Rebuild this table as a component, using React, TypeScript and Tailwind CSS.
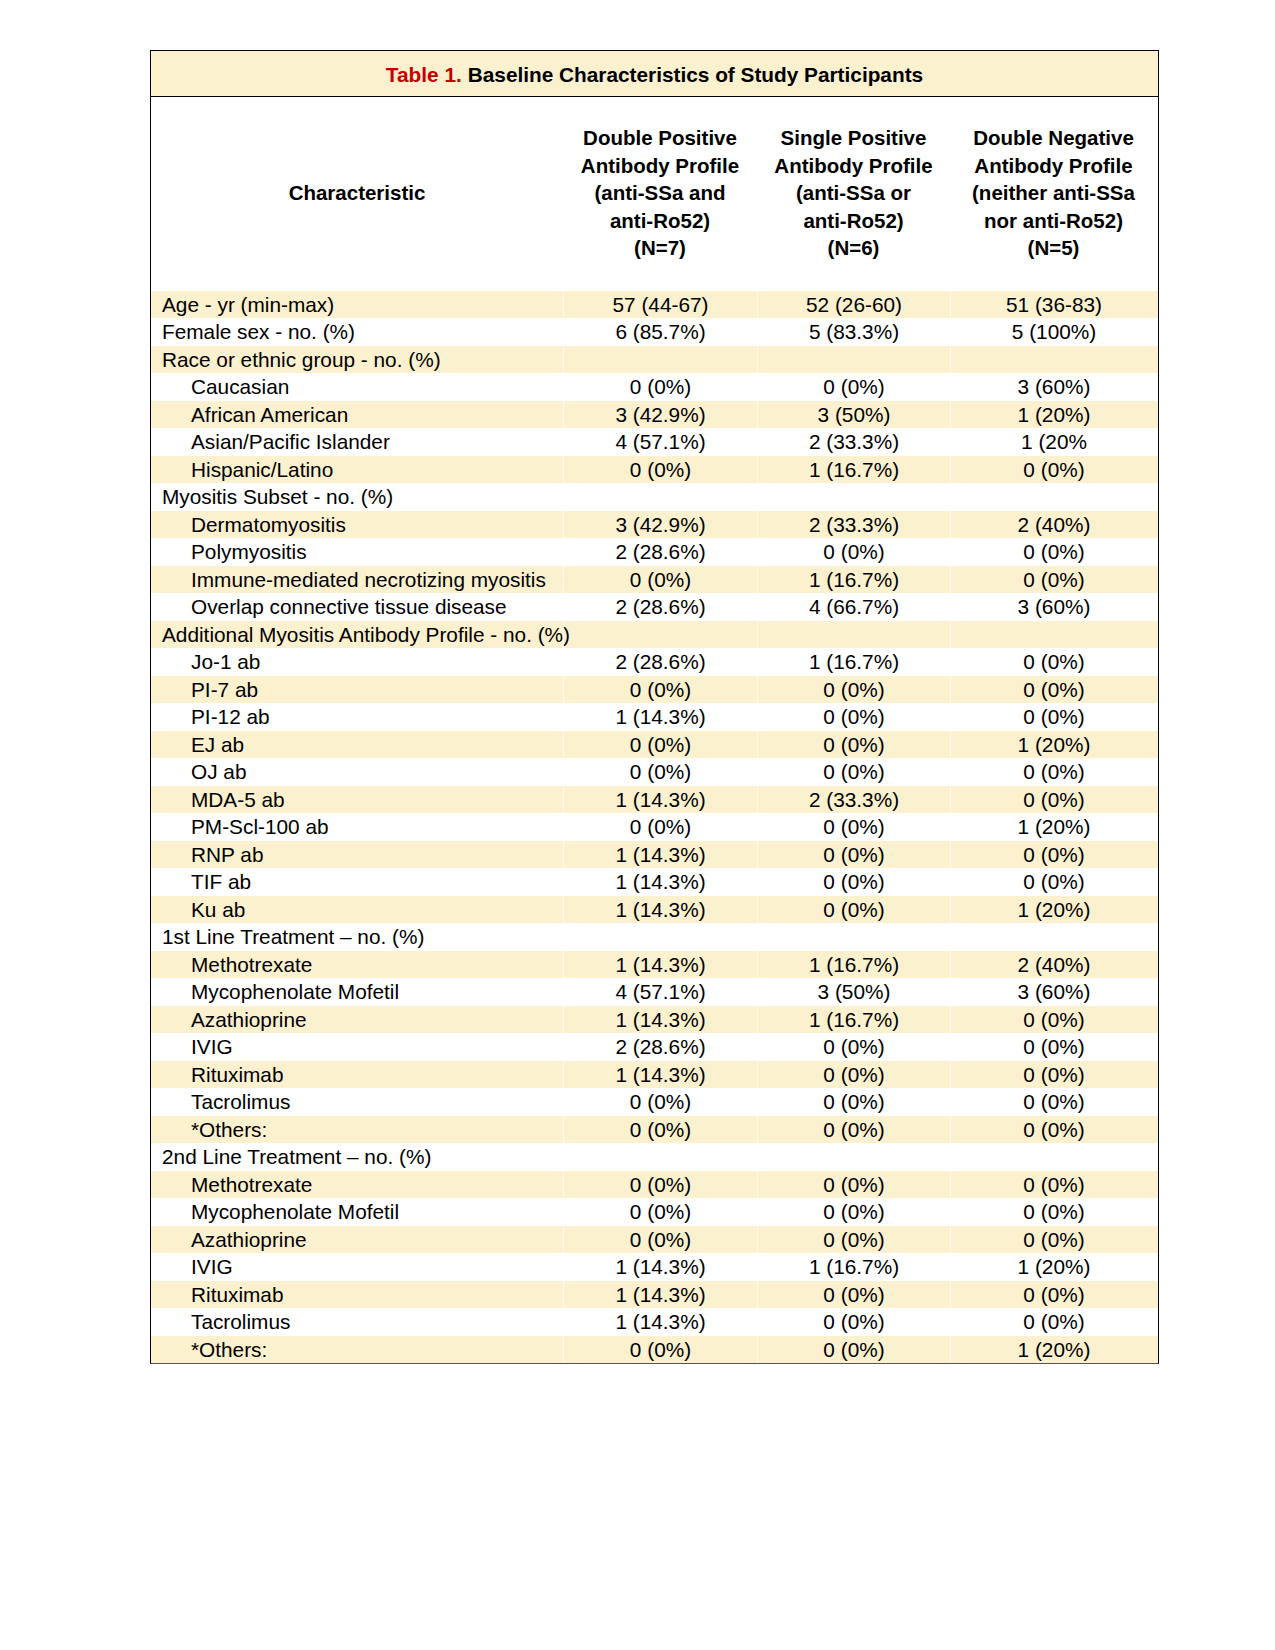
type Row = {
  label: string;
  indent?: boolean;
  values?: [string, string, string];
};

const rows: Row[] = [
  { label: "Age - yr (min-max)", values: ["57 (44-67)", "52 (26-60)", "51 (36-83)"] },
  { label: "Female sex - no. (%)", values: ["6 (85.7%)", "5 (83.3%)", "5 (100%)"] },
  { label: "Race or ethnic group - no. (%)" },
  { label: "Caucasian", indent: true, values: ["0 (0%)", "0 (0%)", "3 (60%)"] },
  { label: "African American", indent: true, values: ["3 (42.9%)", "3 (50%)", "1 (20%)"] },
  { label: "Asian/Pacific Islander", indent: true, values: ["4 (57.1%)", "2 (33.3%)", "1 (20%"] },
  { label: "Hispanic/Latino", indent: true, values: ["0 (0%)", "1 (16.7%)", "0 (0%)"] },
  { label: "Myositis Subset - no. (%)" },
  { label: "Dermatomyositis", indent: true, values: ["3 (42.9%)", "2 (33.3%)", "2 (40%)"] },
  { label: "Polymyositis", indent: true, values: ["2 (28.6%)", "0 (0%)", "0 (0%)"] },
  { label: "Immune-mediated necrotizing myositis", indent: true, values: ["0 (0%)", "1 (16.7%)", "0 (0%)"] },
  { label: "Overlap connective tissue disease", indent: true, values: ["2 (28.6%)", "4 (66.7%)", "3 (60%)"] },
  { label: "Additional Myositis Antibody Profile - no. (%)" },
  { label: "Jo-1 ab", indent: true, values: ["2 (28.6%)", "1 (16.7%)", "0 (0%)"] },
  { label: "PI-7 ab", indent: true, values: ["0 (0%)", "0 (0%)", "0 (0%)"] },
  { label: "PI-12 ab", indent: true, values: ["1 (14.3%)", "0 (0%)", "0 (0%)"] },
  { label: "EJ ab", indent: true, values: ["0 (0%)", "0 (0%)", "1 (20%)"] },
  { label: "OJ ab", indent: true, values: ["0 (0%)", "0 (0%)", "0 (0%)"] },
  { label: "MDA-5 ab", indent: true, values: ["1 (14.3%)", "2 (33.3%)", "0 (0%)"] },
  { label: "PM-Scl-100 ab", indent: true, values: ["0 (0%)", "0 (0%)", "1 (20%)"] },
  { label: "RNP ab", indent: true, values: ["1 (14.3%)", "0 (0%)", "0 (0%)"] },
  { label: "TIF ab", indent: true, values: ["1 (14.3%)", "0 (0%)", "0 (0%)"] },
  { label: "Ku ab", indent: true, values: ["1 (14.3%)", "0 (0%)", "1 (20%)"] },
  { label: "1st Line Treatment \u2013 no. (%)" },
  { label: "Methotrexate", indent: true, values: ["1 (14.3%)", "1 (16.7%)", "2 (40%)"] },
  { label: "Mycophenolate Mofetil", indent: true, values: ["4 (57.1%)", "3 (50%)", "3 (60%)"] },
  { label: "Azathioprine", indent: true, values: ["1 (14.3%)", "1 (16.7%)", "0 (0%)"] },
  { label: "IVIG", indent: true, values: ["2 (28.6%)", "0 (0%)", "0 (0%)"] },
  { label: "Rituximab", indent: true, values: ["1 (14.3%)", "0 (0%)", "0 (0%)"] },
  { label: "Tacrolimus", indent: true, values: ["0 (0%)", "0 (0%)", "0 (0%)"] },
  { label: "*Others:", indent: true, values: ["0 (0%)", "0 (0%)", "0 (0%)"] },
  { label: "2nd Line Treatment \u2013 no. (%)" },
  { label: "Methotrexate", indent: true, values: ["0 (0%)", "0 (0%)", "0 (0%)"] },
  { label: "Mycophenolate Mofetil", indent: true, values: ["0 (0%)", "0 (0%)", "0 (0%)"] },
  { label: "Azathioprine", indent: true, values: ["0 (0%)", "0 (0%)", "0 (0%)"] },
  { label: "IVIG", indent: true, values: ["1 (14.3%)", "1 (16.7%)", "1 (20%)"] },
  { label: "Rituximab", indent: true, values: ["1 (14.3%)", "0 (0%)", "0 (0%)"] },
  { label: "Tacrolimus", indent: true, values: ["1 (14.3%)", "0 (0%)", "0 (0%)"] },
  { label: "*Others:", indent: true, values: ["0 (0%)", "0 (0%)", "1 (20%)"] },
];

const headers = [
  ["Double Positive", "Antibody Profile", "(anti-SSa and", "anti-Ro52)", "(N=7)"],
  ["Single Positive", "Antibody Profile", "(anti-SSa or", "anti-Ro52)", "(N=6)"],
  ["Double Negative", "Antibody Profile", "(neither anti-SSa", "nor anti-Ro52)", "(N=5)"],
];

const cols = "grid grid-cols-[412px_194px_193px_207px]";

export default function App() {
  return (
    <div className="min-h-[1650px] bg-white pl-[150px] pt-[50px] font-['Liberation_Sans',Arial,sans-serif] text-[20.8px] text-black">
      <div className="w-[1009px] border border-b-[#555] border-black">
        <div className="flex h-[46px] items-center justify-center border-b border-black bg-[#fcf1cf] pt-[3px] font-bold">
          <span className="text-[#c80000]">Table 1.</span>
          <span className="ml-[6px]">Baseline Characteristics of Study Participants</span>
        </div>

        <div className={`${cols} pb-[29px] pt-[27px] text-[20.5px] font-bold leading-[27.5px]`}>
          <div className="flex items-center justify-center">Characteristic</div>
          {headers.map((lines, i) => (
            <div key={i} className="flex flex-col items-center text-center">
              {lines.map((line) => (
                <span key={line}>{line}</span>
              ))}
            </div>
          ))}
        </div>

        <div>
          {rows.map((row, i) => (
            <div
              key={i}
              className={`${cols} h-[27.5px] leading-[27.5px] ${i % 2 === 0 ? "bg-[#fcf1cf]" : "bg-white"}`}
            >
              <div className={`whitespace-nowrap ${row.indent ? "pl-[40px]" : "pl-[11px]"}`}>{row.label}</div>
              {[0, 1, 2].map((c) => (
                <div key={c} className="border-l border-white/70 text-center">
                  {row.values ? row.values[c] : ""}
                </div>
              ))}
            </div>
          ))}
        </div>
      </div>
    </div>
  );
}
